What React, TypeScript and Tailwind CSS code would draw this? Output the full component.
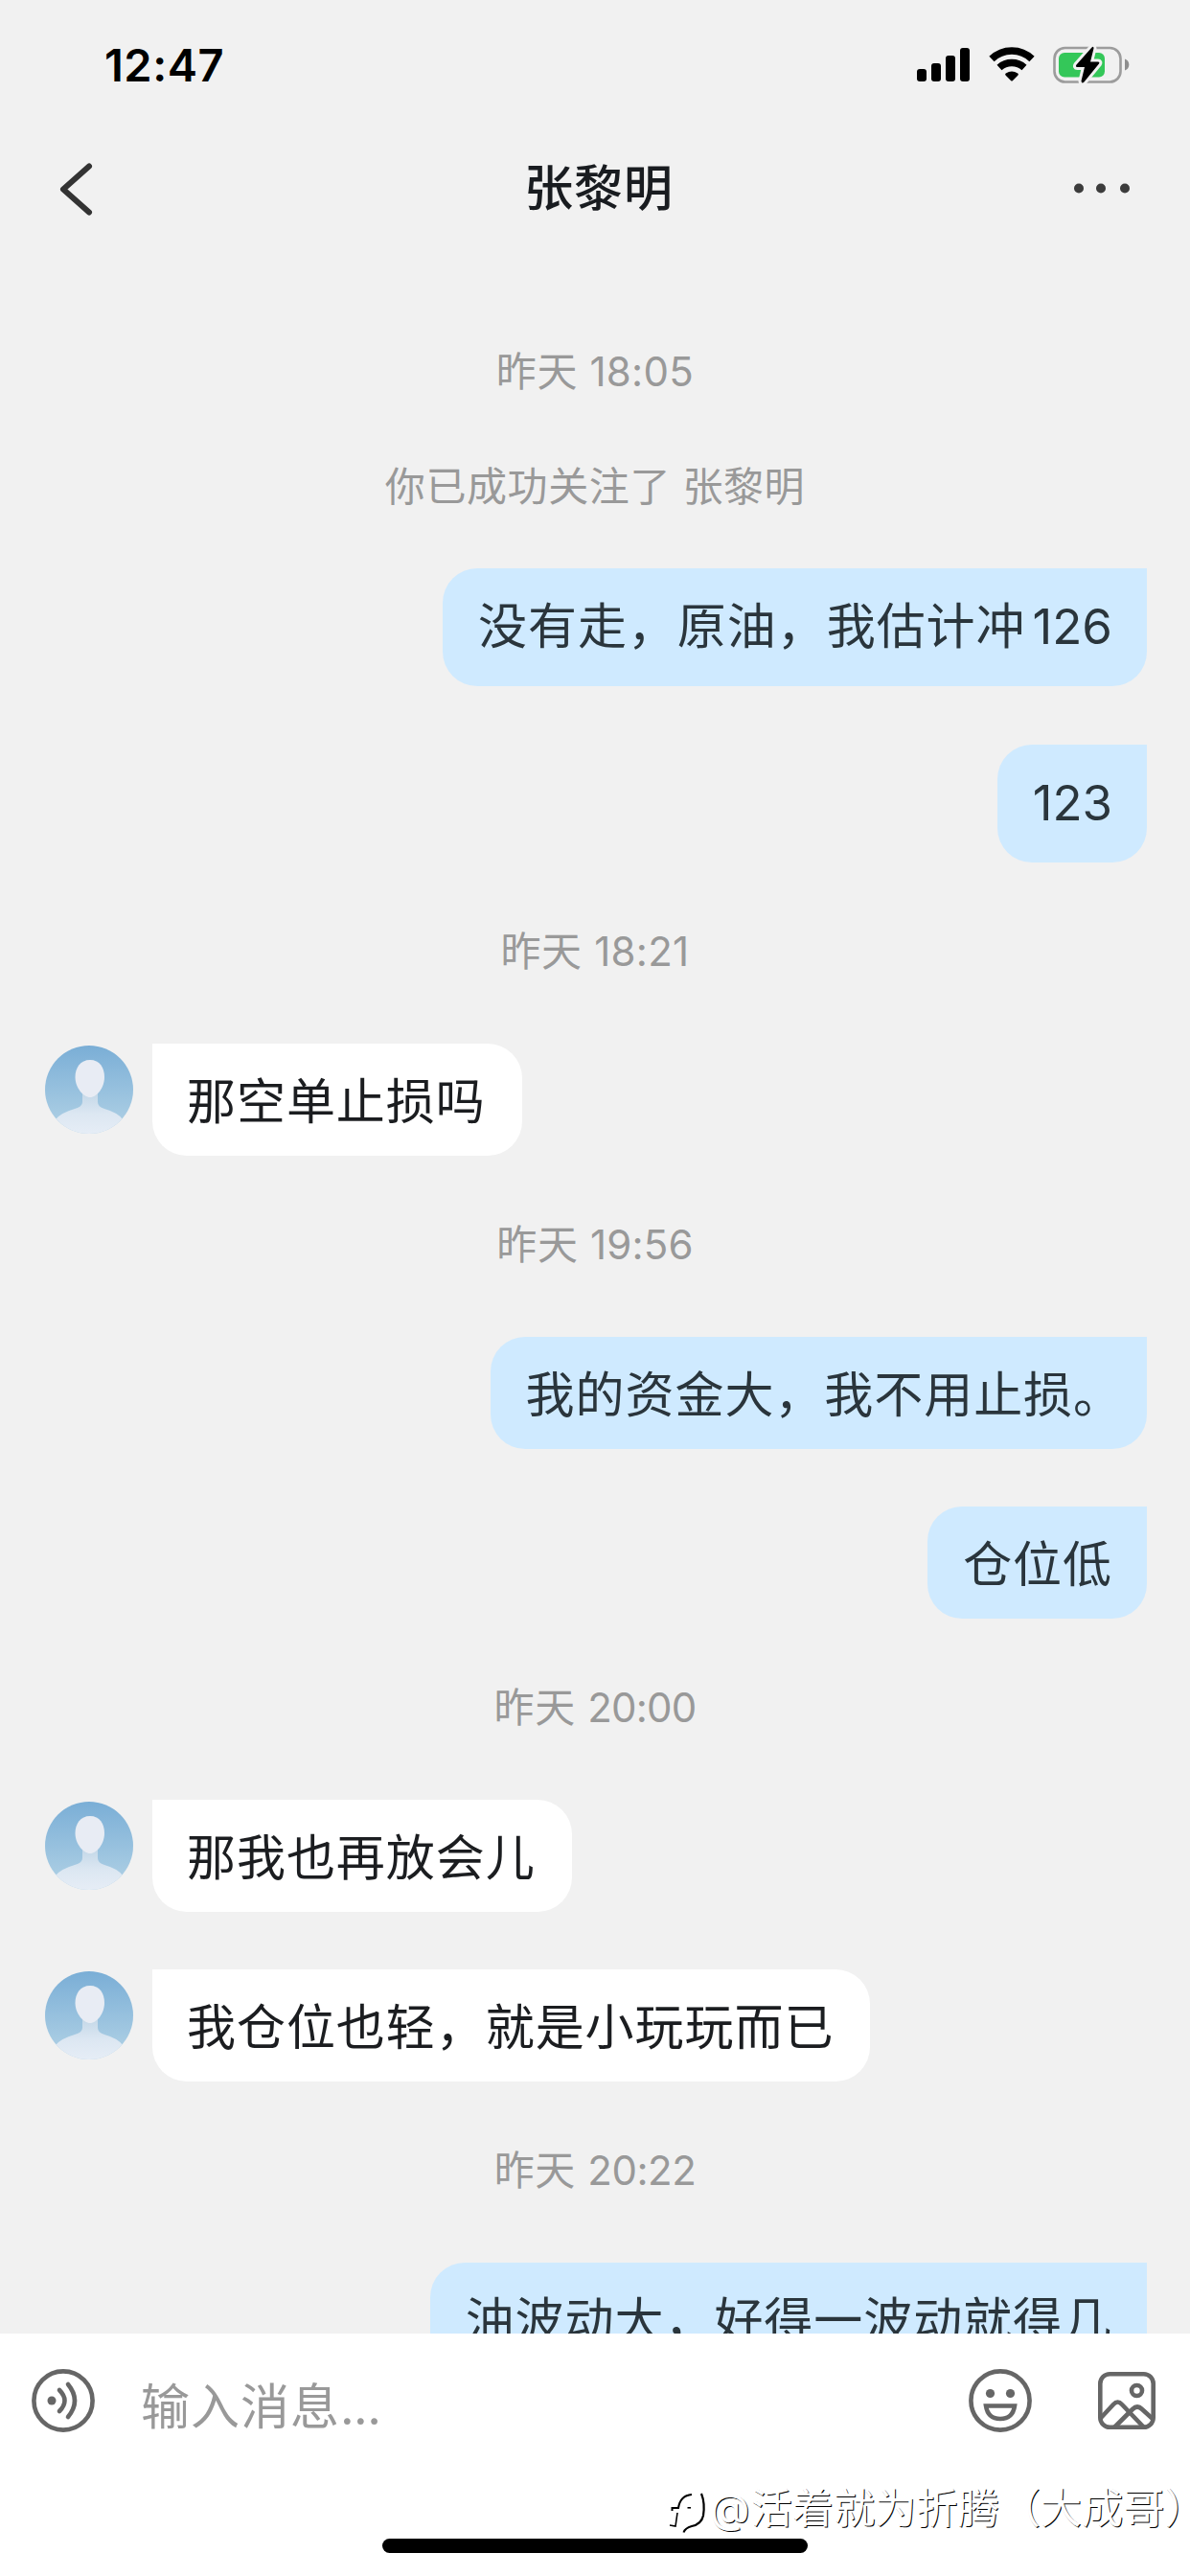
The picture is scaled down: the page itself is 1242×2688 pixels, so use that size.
type Item = {
  kind: 'time' | 'sent' | 'received';
  text: string;
  digits?: string;
  className: string;
  digitsClassName?: string;
};

const items: Item[] = [
  { kind: 'time', text: '昨天 ', digits: '18:05', className: 'mt-[97px]', digitsClassName: 'tracking-[0.3px]' },
  { kind: 'time', text: '你已成功关注了 张黎明', className: 'mt-[60px]' },
  { kind: 'sent', text: '没有走，原油，我估计冲', digits: '126', className: 'mt-[55px] h-[123px]', digitsClassName: 'ml-[7px]' },
  { kind: 'sent', text: '', digits: '123', className: 'mt-[61px] h-[123px]' },
  { kind: 'time', text: '昨天 ', digits: '18:21', className: 'mt-[63px]', digitsClassName: 'tracking-[0.3px]' },
  { kind: 'received', text: '那空单止损吗', className: 'mt-[66px] h-[117px]' },
  { kind: 'time', text: '昨天 ', digits: '19:56', className: 'mt-[63px]', digitsClassName: 'tracking-[0.2px]' },
  { kind: 'sent', text: '我的资金大，我不用止损。', className: 'mt-[66px] h-[117px]' },
  { kind: 'sent', text: '仓位低', className: 'mt-[60px] h-[117px]' },
  { kind: 'time', text: '昨天 ', digits: '20:00', className: 'mt-[63px]', digitsClassName: 'tracking-[-0.8px]' },
  { kind: 'received', text: '那我也再放会儿', className: 'mt-[66px] h-[117px]' },
  { kind: 'received', text: '我仓位也轻，就是小玩玩而已', className: 'mt-[60px] h-[117px]' },
  { kind: 'time', text: '昨天 ', digits: '20:22', className: 'mt-[63px]', digitsClassName: 'tracking-[-0.5px]' },
  { kind: 'sent', text: '油波动大，好得一波动就得几', className: 'mt-[66px] h-[117px]' },
];

function StatusBar() {
  return (
    <div className="flex h-[132px] shrink-0 items-start justify-between pl-[109px] pr-[61px]">
      <span className="mt-[40px] text-[47px] leading-[56px] font-semibold tracking-[0.5px] text-black">12:47</span>
      <div className="mt-[46px] flex items-start">
        <svg width="56" height="42" viewBox="0 0 56 42">
          <rect x="0" y="26" width="10" height="13" rx="3" />
          <rect x="15" y="20" width="10" height="19" rx="3" />
          <rect x="30" y="12" width="10" height="27" rx="3" />
          <rect x="45" y="4" width="10" height="35" rx="3" />
        </svg>
        <svg className="ml-[18px]" width="50" height="42" viewBox="0 0 50 42">
          <path d="M4 15.5 A30 30 0 0 1 46 15.5" fill="none" stroke="#000" strokeWidth="7.5" />
          <path d="M12 24.5 A19.5 19.5 0 0 1 38 24.5" fill="none" stroke="#000" strokeWidth="7.5" />
          <path d="M18.5 32.4 Q17.6 31.4 18.8 30.6 Q25 26.4 31.2 30.6 Q32.4 31.4 31.5 32.4 L26 38 Q25 39 24 38 Z" />
        </svg>
        <svg className="ml-[18px]" width="82" height="42" viewBox="0 0 82 42">
          <rect x="1.5" y="4" width="69" height="35.5" rx="11" fill="none" stroke="#9c9c9c" strokeWidth="2.6" />
          <path d="M75 15.5 a7 6.5 0 0 1 0 12 Z" fill="#8e8e8e" />
          <rect x="6" y="9" width="48" height="25.5" rx="6" fill="#34c759" />
          <path
            d="M40.5 3.5 L24.5 21.5 Q23 24 25.5 24 H33 L29.5 38.5 Q30 42 32.5 39.5 L48 20.5 Q49 18.5 47 18.5 H39 L42.5 4.5 Q42.5 1.5 40.5 3.5 Z"
            stroke="#f1f1f1"
            strokeWidth="6"
            paintOrder="stroke"
          />
        </svg>
      </div>
    </div>
  );
}

function Header() {
  return (
    <header className="flex h-[129px] shrink-0 items-center justify-between pl-[60px] pr-[61px]">
      <svg width="40" height="60" viewBox="0 0 40 60" fill="none">
        <path d="M33 6.5 L6 30.5 L33 54.5" stroke="#333" strokeWidth="6" strokeLinecap="round" strokeLinejoin="round" />
      </svg>
      <h1 className="ml-[29px] text-[51px] leading-[60px] font-medium tracking-[0.9px] text-[#191c20]">张黎明</h1>
      <svg width="60" height="12" viewBox="0 0 60 12" fill="#3c3c3c">
        <circle cx="5" cy="5.5" r="5" />
        <circle cx="28" cy="5.5" r="5" />
        <circle cx="53" cy="5.5" r="5" />
      </svg>
    </header>
  );
}

function Avatar() {
  return (
    <svg className="mt-[2px] mr-[20px] shrink-0" width="92" height="92" viewBox="0 0 92 92">
      <defs>
        <linearGradient id="sky" x1="0" y1="0" x2="0" y2="1">
          <stop offset="0" stopColor="#7aaed6" />
          <stop offset="1" stopColor="#b3d3e6" />
        </linearGradient>
        <linearGradient id="torso" x1="0" y1="0" x2="0" y2="1">
          <stop offset="0" stopColor="#c4d8e8" />
          <stop offset="0.5" stopColor="#dce7f2" />
          <stop offset="1" stopColor="#e6edf6" />
        </linearGradient>
        <clipPath id="round">
          <circle cx="46" cy="46" r="46" />
        </clipPath>
      </defs>
      <g clipPath="url(#round)">
        <rect width="92" height="92" fill="url(#sky)" />
        <path d="M39 50 H55 V59 Q55 64 62 66 Q76 70 81 77 V92 H11 V77 Q17 70 31 66 Q39 64 39 59 Z" fill="url(#torso)" />
        <path d="M47 15 C57 15 62 23 62 33 C62 44 54 54 47 54 C40 54 31.5 44 31.5 33 C31.5 23 37 15 47 15 Z" fill="#e8ecf4" />
      </g>
    </svg>
  );
}

function Bubble({ item }: { item: Item }) {
  const sent = item.kind === 'sent';
  // a trailing full stop hangs into the right padding
  const hanging = item.text.endsWith('。');
  return (
    <div className={`flex shrink-0 ${sent ? 'justify-end pr-[45px]' : 'pl-[47px]'} ${item.className}`}>
      {!sent && <Avatar />}
      <div
        className={`flex items-center rounded-[36px] text-[51px] leading-[60px] tracking-[0.95px] whitespace-nowrap ${
          sent
            ? 'rounded-tr-none bg-[#cfeaff] pl-[37px] text-[#2a353c]'
            : 'rounded-tl-none bg-white pl-[36px] text-[#1b1d20]'
        } ${hanging ? 'pr-[25px]' : sent ? 'pr-[36px]' : 'pr-[38px]'} ${item.digits ? 'pb-px' : 'pt-[5px]'}`}
      >
        {item.text}
        {item.digits && <span className={`tracking-normal ${item.digitsClassName ?? ''}`}>{item.digits}</span>}
      </div>
    </div>
  );
}

function InputBar() {
  return (
    <footer className="relative h-[253px] shrink-0 bg-white">
      <div className="flex h-[133px] items-start pt-[37px] pl-[33px]">
        <svg width="66" height="66" viewBox="0 0 66 66" fill="none" stroke="#666" strokeWidth="4.6" strokeLinecap="round">
          <circle cx="33" cy="33" r="30.6" />
          <circle cx="21" cy="33" r="4.5" fill="#666" stroke="none" />
          <path d="M29 22 Q40 33 29 44" />
          <path d="M38 16 Q52 33 38 50" />
        </svg>
        <span className="mt-[10px] ml-[48px] text-[51px] leading-[60px] tracking-[1px] text-[#999]">
          输入消息<span className="tracking-[-0.6px]">...</span>
        </span>
        <svg className="ml-auto" width="66" height="66" viewBox="0 0 66 66" fill="none" stroke="#666" strokeWidth="4.6">
          <circle cx="33" cy="33" r="30.6" />
          <circle cx="22.5" cy="25.5" r="4.6" fill="#666" stroke="none" />
          <circle cx="43.5" cy="25.5" r="4.6" fill="#666" stroke="none" />
          <path d="M18 38.5 H48 Q46 52 33 52 Q20 52 18 38.5 Z" />
        </svg>
        <svg
          className="mt-[3px] mr-[36px] ml-[69px]"
          width="60"
          height="60"
          viewBox="0 0 60 60"
          fill="none"
          stroke="#666"
          strokeWidth="4.6"
        >
          <rect x="2.3" y="2.3" width="55.4" height="55.4" rx="10" />
          <circle cx="40.5" cy="19.5" r="5.5" />
          <path d="M3 48 L16 34 Q20.5 29 25 34 L48 58" />
          <path d="M17 58 L36 39 Q41 34 46 39 L57 49" />
        </svg>
      </div>
      <div className="mx-auto mt-[81px] h-[15px] w-[444px] rounded-full bg-black" />
      <div className="absolute right-[5px] bottom-[44px] flex items-center text-white">
        <svg className="mt-[10px] mr-px" width="42" height="44" viewBox="0 0 42 44" fill="none" stroke="#000">
          <path d="M3.5 20 V17 H10 Q12 4 24 3" strokeWidth="2" />
          <path d="M9 22 L7 36 L1 35" strokeWidth="1.6" />
          <path d="M34 2 Q38 12 36 25 Q34 34 24 36 Q17 38 15.5 42.5" strokeWidth="2.2" />
          <path d="M19.5 16.8 H23" strokeWidth="1.6" />
        </svg>
        <span className="text-[43.2px] leading-[52px] whitespace-nowrap [text-shadow:1px_1px_0_#000]">
          <span className="mr-px">@</span>活着就为折腾（大成哥<span className="[font-feature-settings:'halt']">）</span>
        </span>
      </div>
    </footer>
  );
}

export default function App() {
  return (
    <div className="flex h-[2688px] w-[1242px] flex-col overflow-hidden bg-[#f1f1f1] font-[Inter,'Noto_Sans_CJK_SC',sans-serif]">
      <StatusBar />
      <Header />
      <main className="flex min-h-0 flex-1 flex-col overflow-hidden">
        {items.map((item, i) =>
          item.kind === 'time' ? (
            <p
              key={i}
              className={`shrink-0 text-center text-[42px] leading-[60px] tracking-[0.6px] text-[#999] ${item.className}`}
            >
              {item.text}
              {item.digits && <span className={item.digitsClassName}>{item.digits}</span>}
            </p>
          ) : (
            <Bubble key={i} item={item} />
          )
        )}
      </main>
      <InputBar />
    </div>
  );
}
